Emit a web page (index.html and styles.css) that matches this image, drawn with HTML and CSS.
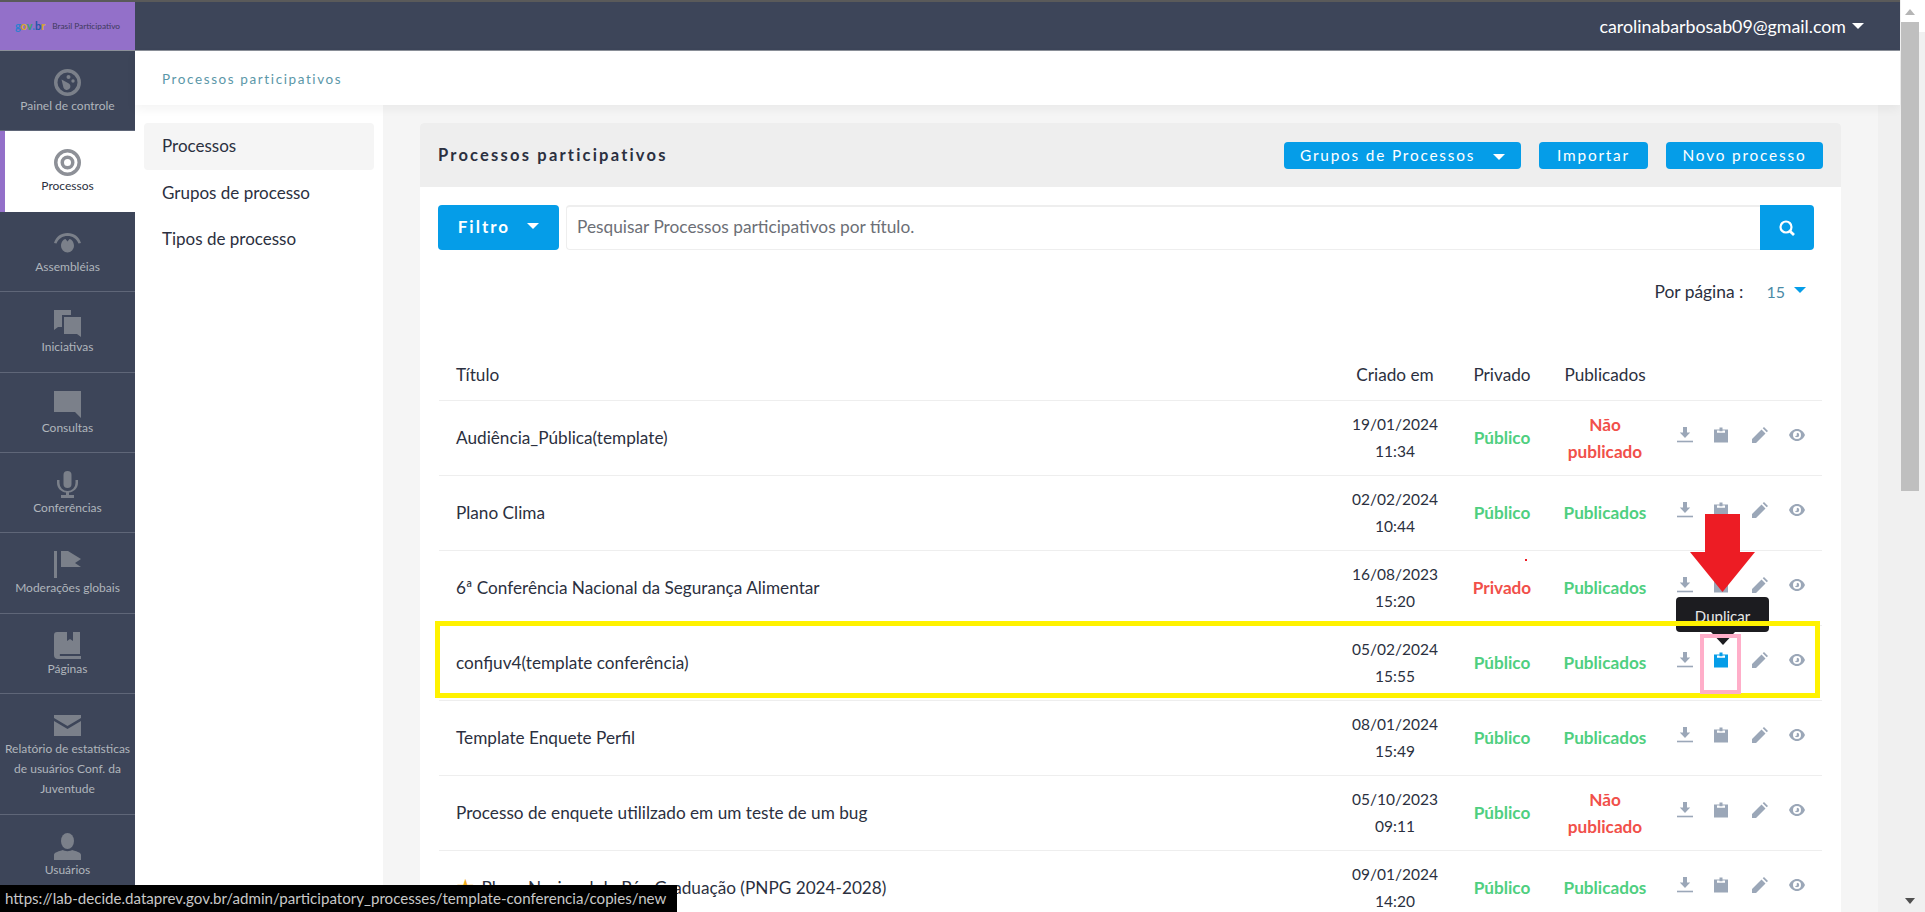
FILE: index.html
```html
<!DOCTYPE html>
<html lang="pt-BR">
<head>
    <meta charset="UTF-8">
    <title>Processos participativos</title>
    <link rel="stylesheet" href="styles.css">
</head>
<body>

    <!-- Shared table icons -->
    <svg class="icon-defs" width="0" height="0">
        <symbol id="i-download" viewBox="0 0 16 16">
            <path d="M6 0h4v5.500h3.200L8 11 2.800 5.500H6z"/><rect x="0" y="13.700" width="16" height="1.600"/>
        </symbol>
        <symbol id="i-clipboard" viewBox="0 0 14 15">
            <path d="M0 2h5.500V0h3v2H14v13H0zM3 3v2.200h8V3H8.500v.8h-3V3z" fill-rule="evenodd"/>
        </symbol>
        <symbol id="i-pencil" viewBox="0 0 16 16">
            <path d="M0 16v-4L9.500 2.500l4 4L4 16zM10.700 1.300 12 0l4 4-1.300 1.300z"/>
        </symbol>
        <symbol id="i-eye" viewBox="0 0 16 12">
            <path d="M8 0c3.600 0 6.500 2.400 8 6-1.500 3.600-4.400 6-8 6s-6.500-2.400-8-6c1.500-3.600 4.400-6 8-6zm0 2a4 4 0 1 0 0 8 4 4 0 0 0 0-8zm0 1.800a2.200 2.200 0 1 1-2.200 2.200c0 .6.500 1 1 1s1-.5 1-1-.2-1 .2-2.200z" fill-rule="evenodd"/>
        </symbol>
    </svg>

    <div class="app">
        <div class="page">
            <header class="topbar">
                <div class="logo">
                    <span class="gov"><b class="c1">g</b><b class="c2">o</b><b class="c3">v</b><b class="c1">.</b><b class="c4">b</b><b class="c2">r</b></span>
                    <span class="logo-name">Brasil Participativo</span>
                </div>
                <div class="user">carolinabarbosab09@gmail.com <i class="caret caret-white"></i></div>
            </header>

            <div class="layout">
                <nav class="sidebar">
                    <a class="side-item">
                        <svg viewBox="0 0 27 27"><path d="M13.500 0a13.500 13.500 0 1 1 0 27 13.500 13.500 0 0 1 0-27zm0 3.500a10 10 0 1 0 0 20 10 10 0 0 0 0-20z" fill-rule="evenodd"/><path d="M7.500 10.500 14 14a3.600 3.600 0 1 1-4.500 4.800z"/><circle cx="14.500" cy="8" r="2"/><circle cx="19" cy="12" r="1.700"/></svg>
                        <span>Painel de controle</span>
                    </a>
                    <a class="side-item active">
                        <svg viewBox="0 0 27 27"><path d="M13.500 0a13.500 13.500 0 1 1 0 27 13.500 13.500 0 0 1 0-27zm0 3.500a10 10 0 1 0 0 20 10 10 0 0 0 0-20zm0 3a7 7 0 1 1 0 14 7 7 0 0 1 0-14zm0 3.500a3.500 3.500 0 1 0 0 7 3.500 3.500 0 0 0 0-7z" fill-rule="evenodd"/></svg>
                        <span>Processos</span>
                    </a>
                    <a class="side-item">
                        <svg viewBox="0 0 27 27"><path d="M0 13C2 6.500 7 3 13.500 3S25 6.500 27 13l-2.500.5C22.500 8.500 18.500 6 13.500 6S4.500 8.500 2.500 13.500z"/><path d="M7 16c0-4 2.500-7 4.500-7l2 2.500 2-2.500c2 0 4.500 3 4.500 7a6.500 6.500 0 0 1-13 0z"/></svg>
                        <span>Assembléias</span>
                    </a>
                    <a class="side-item">
                        <svg viewBox="0 0 27 27"><path d="M0 0h17v5H8v12l-4 0-4 3z"/><path d="M10 7h17v20l-4-3H10z"/></svg>
                        <span>Iniciativas</span>
                    </a>
                    <a class="side-item">
                        <svg viewBox="0 0 27 27"><path d="M0 0h27v27l-6-6H0z"/></svg>
                        <span>Consultas</span>
                    </a>
                    <a class="side-item">
                        <svg viewBox="0 0 27 27"><rect x="9.500" y="0" width="8" height="17" rx="4"/><path d="M3 9h2.500v3a8 8 0 0 0 16 0V9H24v3c0 5-4 9-9 9.500V24h5v3H7v-3h5v-2.500C7 21 3 17 3 12z"/></svg>
                        <span>Conferências</span>
                    </a>
                    <a class="side-item">
                        <svg viewBox="0 0 27 27"><rect x="0" y="0" width="3" height="27"/><path d="M7 0h7l13 8-6 4 6 4H7z"/></svg>
                        <span>Moderações globais</span>
                    </a>
                    <a class="side-item">
                        <svg viewBox="0 0 27 27"><path d="M3 0h10v9l3-2 3 2V0h7v22H6a2 2 0 0 0 0 2h21v3H4a4 4 0 0 1-4-4V3a3 3 0 0 1 3-3z"/></svg>
                        <span>Páginas</span>
                    </a>
                    <a class="side-item">
                        <svg viewBox="0 0 27 27"><path d="M0 3h27v3L13.500 14 0 6z"/><path d="M0 9l13.500 8L27 9v15H0z"/></svg>
                        <span>Relatório de estatísticas de usuários Conf. da Juventude</span>
                    </a>
                    <a class="side-item">
                        <svg viewBox="0 0 27 27"><ellipse cx="13.500" cy="8" rx="6.500" ry="8"/><path d="M0 27v-5c0-2 2-3 9-5 1 1.500 8 1.500 9 0 7 2 9 3 9 5v5z"/></svg>
                        <span>Usuários</span>
                    </a>
                </nav>

                <div class="content">
                    <div class="subheader">Processos participativos</div>
                    <div class="workspace">
                        <aside class="submenu">
                            <a class="submenu-item selected">Processos</a>
                            <a class="submenu-item">Grupos de processo</a>
                            <a class="submenu-item">Tipos de processo</a>
                        </aside>

                        <main class="main">
                            <section class="card">
                                <div class="card-header">
                                    <h2>Processos participativos</h2>
                                    <div class="card-actions">
                                        <button class="btn btn-groups">Grupos de Processos <i class="caret caret-white"></i></button>
                                        <button class="btn btn-import">Importar</button>
                                        <button class="btn btn-new">Novo processo</button>
                                    </div>
                                </div>

                                <div class="filters">
                                    <button class="btn-filter">Filtro <i class="caret caret-white"></i></button>
                                    <input class="search" type="text" placeholder="Pesquisar Processos participativos por título.">
                                    <button class="btn-search">
                                        <svg viewBox="0 0 16 16" width="16" height="16"><circle cx="7" cy="7" r="5.500" fill="none" stroke="#fff" stroke-width="2.200"/><path d="M10.800 11 15 15" stroke="#fff" stroke-width="2.800"/></svg>
                                    </button>
                                </div>

                                <div class="per-page">
                                    <span>Por página :</span>
                                    <span class="per-page-value">15</span>
                                    <i class="caret caret-blue"></i>
                                </div>

                                <table class="processes">
                                    <thead>
                                        <tr>
                                            <th class="col-title">Título</th>
                                            <th class="col-date">Criado em</th>
                                            <th class="col-private">Privado</th>
                                            <th class="col-published">Publicados</th>
                                            <th class="col-actions"></th>
                                        </tr>
                                    </thead>
                                    <tbody>
                                        <tr>
                                            <td class="title">Audiência_Pública(template)</td>
                                            <td class="center date">19/01/2024<br>11:34</td>
                                            <td class="center ok">Público</td>
                                            <td class="center bad">Não<br>publicado</td>
                                            <td><div class="actions"><svg class="a-dl"><use href="#i-download"/></svg><svg class="a-cp"><use href="#i-clipboard"/></svg><svg class="a-pn"><use href="#i-pencil"/></svg><svg class="a-ey"><use href="#i-eye"/></svg></div></td>
                                        </tr>
                                        <tr>
                                            <td class="title">Plano Clima</td>
                                            <td class="center date">02/02/2024<br>10:44</td>
                                            <td class="center ok">Público</td>
                                            <td class="center ok">Publicados</td>
                                            <td><div class="actions"><svg class="a-dl"><use href="#i-download"/></svg><svg class="a-cp"><use href="#i-clipboard"/></svg><svg class="a-pn"><use href="#i-pencil"/></svg><svg class="a-ey"><use href="#i-eye"/></svg></div></td>
                                        </tr>
                                        <tr>
                                            <td class="title">6ª Conferência Nacional da Segurança Alimentar</td>
                                            <td class="center date">16/08/2023<br>15:20</td>
                                            <td class="center bad">Privado</td>
                                            <td class="center ok">Publicados</td>
                                            <td><div class="actions"><svg class="a-dl"><use href="#i-download"/></svg><svg class="a-cp"><use href="#i-clipboard"/></svg><svg class="a-pn"><use href="#i-pencil"/></svg><svg class="a-ey"><use href="#i-eye"/></svg></div></td>
                                        </tr>
                                        <tr>
                                            <td class="title">confjuv4(template conferência)</td>
                                            <td class="center date">05/02/2024<br>15:55</td>
                                            <td class="center ok">Público</td>
                                            <td class="center ok">Publicados</td>
                                            <td><div class="actions"><svg class="a-dl"><use href="#i-download"/></svg><svg class="a-cp hover"><use href="#i-clipboard"/></svg><svg class="a-pn"><use href="#i-pencil"/></svg><svg class="a-ey"><use href="#i-eye"/></svg></div></td>
                                        </tr>
                                        <tr>
                                            <td class="title">Template Enquete Perfil</td>
                                            <td class="center date">08/01/2024<br>15:49</td>
                                            <td class="center ok">Público</td>
                                            <td class="center ok">Publicados</td>
                                            <td><div class="actions"><svg class="a-dl"><use href="#i-download"/></svg><svg class="a-cp"><use href="#i-clipboard"/></svg><svg class="a-pn"><use href="#i-pencil"/></svg><svg class="a-ey"><use href="#i-eye"/></svg></div></td>
                                        </tr>
                                        <tr>
                                            <td class="title">Processo de enquete utililzado em um teste de um bug</td>
                                            <td class="center date">05/10/2023<br>09:11</td>
                                            <td class="center ok">Público</td>
                                            <td class="center bad">Não<br>publicado</td>
                                            <td><div class="actions"><svg class="a-dl"><use href="#i-download"/></svg><svg class="a-cp"><use href="#i-clipboard"/></svg><svg class="a-pn"><use href="#i-pencil"/></svg><svg class="a-ey"><use href="#i-eye"/></svg></div></td>
                                        </tr>
                                        <tr>
                                            <td class="title"><span class="star">★</span> Plano Nacional de Pós-Graduação (PNPG 2024-2028)</td>
                                            <td class="center date">09/01/2024<br>14:20</td>
                                            <td class="center ok">Público</td>
                                            <td class="center ok">Publicados</td>
                                            <td><div class="actions"><svg class="a-dl"><use href="#i-download"/></svg><svg class="a-cp"><use href="#i-clipboard"/></svg><svg class="a-pn"><use href="#i-pencil"/></svg><svg class="a-ey"><use href="#i-eye"/></svg></div></td>
                                        </tr>
                                    </tbody>
                                </table>
                            </section>
                            <div class="gutter"></div>
                        </main>
                    </div>
                </div>
            </div>
        </div>

        <!-- Browser scrollbar -->
        <div class="scrollbar">
            <div class="scroll-lane">
                <div class="scroll-up"></div>
                <div class="scroll-thumb"></div>
                <div class="scroll-down"></div>
            </div>
            <div class="scroll-edge"></div>
        </div>
    </div>

    <!-- Tooltip and the annotations drawn over the screenshot -->
    <div class="tooltip">Duplicar</div>
    <div class="mark-yellow"></div>
    <div class="mark-pink"></div>
    <div class="red-speck"></div>
    <svg class="mark-arrow" viewBox="0 0 65 78"><path d="M15 0h35v38h15L32.500 78 0 38h15z"/></svg>
    <div class="status-bar">https://lab-decide.dataprev.gov.br/admin/participatory_processes/template-conferencia/copies/new</div>

</body>
</html>
```

FILE: styles.css
```css
/* General page styling */
body {
    margin: 0;
    height: 912px;
    overflow: hidden;
    font-family: "Lato", "Noto Sans", sans-serif;
    color: #2b3040;
    background: #f5f5f5;
}

.icon-defs {
    position: absolute;
}

.app {
    display: flex;
    height: 912px;
}

.page {
    width: 1900px;
    display: flex;
    flex-direction: column;
}

/* Carets */
.caret {
    display: inline-block;
    width: 0;
    height: 0;
    border-left: 6px solid transparent;
    border-right: 6px solid transparent;
    vertical-align: middle;
}

.caret-white {
    border-top: 6px solid #ffffff;
}

.caret-blue {
    border-top: 6px solid #059de8;
}

/* Top bar */
.topbar {
    height: 48px;
    flex: none;
    display: flex;
    justify-content: space-between;
    align-items: center;
    background: #3d4559;
    border-top: 2px solid #5a5a5a;
    border-bottom: 1px solid #8b9099;
}

.logo {
    width: 135px;
    height: 100%;
    background: #9370c9;
    display: flex;
    align-items: center;
    justify-content: center;
    gap: 7px;
    font-size: 8.300px;
    padding-bottom: 1px;
    box-sizing: border-box;
}

.gov b {
    font-size: 11px;
    font-weight: 700;
}

.c1 { color: #2f7fd0; }
.c2 { color: #d9a928; }
.c3 { color: #35a26c; }
.c4 { color: #2456a8; }

.logo-name {
    color: #3e3a5c;
}

.user {
    color: #ffffff;
    font-size: 17.800px;
    padding-right: 36px;
    display: flex;
    align-items: center;
    gap: 6px;
}

.layout {
    flex: 1;
    display: flex;
    min-height: 0;
}

/* Left sidebar */
.sidebar {
    width: 135px;
    flex: none;
    background: #3d4559;
}

.side-item {
    display: block;
    height: 80.400px;
    box-sizing: border-box;
    padding: 18px 0 0;
    text-align: center;
    border-bottom: 1px solid #5f6678;
    color: #b0b5bc;
    font-size: 12px;
    line-height: 20px;
}

.side-item svg {
    display: block;
    width: 27px;
    height: 27px;
    margin: 0 auto;
    fill: #7b808a;
}

.side-item span {
    display: block;
    padding: 0 1px;
}

.side-item:nth-child(9) {
    height: 121px;
}

.side-item.active {
    background: #ffffff;
    color: #2b3040;
    border-left: 5px solid #9370c9;
    border-bottom: none;
    padding-right: 5px;
}

.side-item.active svg {
    fill: #8d9097;
}

/* Sub header */
.content {
    flex: 1;
    display: flex;
    flex-direction: column;
    min-width: 0;
}

.subheader {
    height: 54px;
    flex: none;
    box-sizing: border-box;
    padding: 20px 27px 0;
    background: #ffffff;
    color: #5b97a8;
    font-size: 13.500px;
    letter-spacing: 1.600px;
    box-shadow: 0 4px 10px rgba(0, 0, 0, 0.05);
    position: relative;
}

.workspace {
    flex: 1;
    display: flex;
    min-height: 0;
}

/* Second level menu */
.submenu {
    width: 248px;
    flex: none;
    box-sizing: border-box;
    padding: 18px 9px;
    background: #ffffff;
}

.submenu-item {
    display: block;
    height: 46.500px;
    line-height: 46.500px;
    padding-left: 18px;
    font-size: 17px;
    border-radius: 4px;
}

.submenu-item.selected {
    background: #f5f5f5;
}

/* Main area */
.main {
    flex: 1;
    display: flex;
    min-width: 0;
    background: #f5f5f5;
}

.gutter {
    width: 22px;
    flex: none;
    background: #f0f0f0;
}

.card {
    flex: 1;
    margin: 18px 37px 0 37px;
    background: #ffffff;
    border-radius: 4px 4px 0 0;
    overflow: hidden;
}

.card-header {
    height: 64px;
    display: flex;
    justify-content: space-between;
    align-items: center;
    padding: 0 18px 0 18px;
    background: #eeeeee;
}

.card-header h2 {
    margin: 0;
    font-size: 16.500px;
    font-weight: 700;
    letter-spacing: 2.200px;
}

.card-actions {
    display: flex;
    gap: 18px;
}

.btn {
    height: 27px;
    padding: 0;
    border: none;
    border-radius: 4px;
    background: #059de8;
    color: #ffffff;
    font-family: inherit;
    font-size: 15.400px;
    font-weight: 400;
    letter-spacing: 1.800px;
}

.btn-groups {
    width: 237px;
}

.btn-groups .caret {
    margin-left: 12px;
}

.btn-import {
    width: 109px;
}

.btn-new {
    width: 157px;
}

/* Filter row */
.filters {
    display: flex;
    height: 45px;
    margin: 18px 27px 0 18px;
}

.btn-filter {
    width: 121px;
    padding: 0 0 2px;
    border: none;
    border-radius: 4px;
    background: #059de8;
    color: #ffffff;
    font-family: inherit;
    font-size: 17px;
    font-weight: 700;
    letter-spacing: 2px;
}

.btn-filter .caret {
    margin-left: 11px;
    margin-top: -5px;
}

.search {
    flex: 1;
    min-width: 0;
    margin-left: 7px;
    box-sizing: border-box;
    padding: 0 10px 3px;
    border: 1px solid #eeeeee;
    border-top: 2px solid #eeeeee;
    border-right: none;
    border-radius: 4px 0 0 4px;
    font-family: inherit;
    font-size: 17.300px;
    background: #ffffff;
}

.search::placeholder {
    color: #6c6f76;
    opacity: 1;
}

.btn-search {
    width: 54px;
    border: none;
    border-radius: 0 4px 4px 0;
    background: #059de8;
    padding: 0;
    display: flex;
    align-items: center;
    justify-content: center;
}

/* Per page selector */
.per-page {
    height: 28px;
    margin: 27px 35px 0 0;
    display: flex;
    justify-content: flex-end;
    align-items: center;
    font-size: 17.400px;
}

.per-page-value {
    margin-left: 23px;
    margin-right: 9px;
    color: #4a8aa6;
    font-size: 16px;
}

.caret-blue {
    margin-top: -2px;
}

/* Process table */
.processes {
    width: 1383px;
    margin: 45px 0 0 19px;
    border-collapse: collapse;
    table-layout: fixed;
    font-size: 17.200px;
}

.processes th {
    height: 50px;
    box-sizing: border-box;
    padding: 0;
    font-weight: 400;
    border-bottom: 1px solid #eeeeee;
}

.col-title {
    width: 899px;
    text-align: left;
    padding-left: 17px !important;
}

.col-date {
    width: 114px;
}

.col-private {
    width: 100px;
}

.col-published {
    width: 106px;
}

.processes td {
    height: 75px;
    box-sizing: border-box;
    padding: 0;
    line-height: 27px;
    border-bottom: 1px solid #eeeeee;
}

.processes .title {
    padding: 0 0 0 17px;
    white-space: nowrap;
}

.center {
    text-align: center;
}

.processes .date {
    font-size: 15.500px;
    padding-top: 1px;
}

.ok {
    color: #4fcf80;
    font-weight: 700;
}

.bad {
    color: #f1504a;
    font-weight: 700;
}

.star {
    color: #f4ae1a;
    font-size: 21px;
    line-height: 20px;
    margin-right: 2px;
}

/* Row actions */
.actions {
    display: grid;
    grid-template-columns: 36px 36px 42px 32px;
    justify-items: center;
    align-items: center;
    padding: 0 0 5px 9px;
}

.actions svg {
    fill: #9ba7b8;
    height: 16px;
}

.a-dl {
    width: 16px;
}

.a-cp {
    width: 14px;
}

.a-pn {
    width: 16px;
}

.a-ey {
    width: 16px;
}

.actions .hover {
    fill: #059de8;
}

/* Scrollbar */
.scrollbar {
    width: 25px;
    flex: none;
    display: flex;
    background: #f0f0f0;
}

.scroll-lane {
    width: 18px;
    margin-left: 1px;
    display: flex;
    flex-direction: column;
    position: relative;
    background: linear-gradient(#ffffff 22px, #f0f0f0 22px);
}

.scroll-up {
    margin: 9px auto 0;
    width: 0;
    height: 0;
    border-left: 5px solid transparent;
    border-right: 5px solid transparent;
    border-bottom: 6px solid #b5b5b5;
}

.scroll-thumb {
    margin-top: 7px;
    height: 469px;
    background: #bfbfbf;
}

.scroll-down {
    margin: auto auto 8px;
    width: 0;
    height: 0;
    border-left: 5px solid transparent;
    border-right: 5px solid transparent;
    border-top: 6px solid #505050;
}

.scroll-edge {
    flex: 1;
    background: linear-gradient(#ffffff 32px, #f0f0f0 32px);
}

/* Tooltip */
.tooltip {
    position: absolute;
    left: 1676px;
    top: 597px;
    width: 93px;
    height: 35px;
    line-height: 39px;
    text-align: center;
    background: #1c1c20;
    color: #e8e8e8;
    font-size: 15px;
    border-radius: 4px;
}

.tooltip::after {
    content: "";
    position: absolute;
    left: 35px;
    top: 35px;
    border-left: 12px solid transparent;
    border-right: 12px solid transparent;
    border-top: 13px solid #1c1c20;
}

/* Annotations */
.mark-yellow {
    position: absolute;
    left: 435px;
    top: 621px;
    width: 1375px;
    height: 67px;
    border: 5px solid #fff200;
}

.mark-pink {
    position: absolute;
    left: 1700px;
    top: 634px;
    width: 33px;
    height: 52px;
    border: 4px solid #ffaec9;
}

.mark-arrow {
    position: absolute;
    left: 1690px;
    top: 514px;
    width: 65px;
    height: 78px;
    fill: #ed1c24;
}

.red-speck {
    position: absolute;
    left: 1525px;
    top: 559px;
    width: 2px;
    height: 2px;
    background: #ed1c24;
}

/* Browser status bar */
.status-bar {
    position: absolute;
    left: 0;
    top: 885px;
    width: 677px;
    height: 27px;
    box-sizing: border-box;
    padding-left: 5px;
    line-height: 27px;
    background: #000000;
    color: #c8c8c8;
    font-size: 15.100px;
    white-space: nowrap;
    overflow: hidden;
}
```
